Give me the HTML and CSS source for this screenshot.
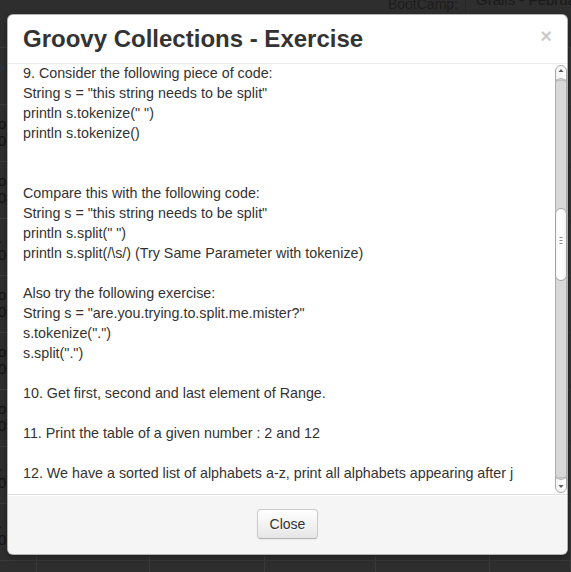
FILE: index.html
```html
<!DOCTYPE html>
<html>
<head>
<meta charset="utf-8">
<link rel="stylesheet" href="styles.css">
</head>
<body>
<div class="page">
  <div class="topbar">
    <span class="label">BootCamp:</span>
    <span class="select">Grails - February 2014</span>
  </div>
  <div class="table">
    <div class="row"><div class="cell first"><span class="link">›</span><span></span></div><div class="cell w1"></div><div class="cell w2"></div><div class="cell w3"></div><div class="cell w4"></div><div class="cell"></div></div>
    <div class="row"><div class="cell first"><span>o</span><span>0</span></div><div class="cell w1"></div><div class="cell w2"></div><div class="cell w3"></div><div class="cell w4"></div><div class="cell"></div></div>
    <div class="row"><div class="cell first"><span>o</span><span>0</span></div><div class="cell w1"></div><div class="cell w2"></div><div class="cell w3"></div><div class="cell w4"></div><div class="cell"></div></div>
    <div class="row"><div class="cell first"><span>.</span><span>0</span></div><div class="cell w1"></div><div class="cell w2"></div><div class="cell w3"></div><div class="cell w4"></div><div class="cell"></div></div>
    <div class="row"><div class="cell first"><span>o</span><span>0</span></div><div class="cell w1"></div><div class="cell w2"></div><div class="cell w3"></div><div class="cell w4"></div><div class="cell"></div></div>
    <div class="row"><div class="cell first"><span>o</span><span>0</span></div><div class="cell w1"></div><div class="cell w2"></div><div class="cell w3"></div><div class="cell w4"></div><div class="cell"></div></div>
    <div class="row"><div class="cell first"><span>o</span><span>0</span></div><div class="cell w1"></div><div class="cell w2"></div><div class="cell w3"></div><div class="cell w4"></div><div class="cell"></div></div>
    <div class="row"><div class="cell first"><span>.</span><span>0</span></div><div class="cell w1"></div><div class="cell w2"></div><div class="cell w3"></div><div class="cell w4"></div><div class="cell"></div></div>
    <div class="row"><div class="cell first"><span>.</span><span>0</span></div><div class="cell w1"></div><div class="cell w2"></div><div class="cell w3"></div><div class="cell w4"></div><div class="cell"></div></div>
    <div class="row last"><div class="cell first"></div><div class="cell w1"></div><div class="cell w2"></div><div class="cell w3"></div><div class="cell w4"></div><div class="cell"></div></div>
  </div>
</div>

<div class="modal">
  <div class="modal-header">
    <h3>Groovy Collections - Exercise</h3>
    <span class="close">×</span>
  </div>
  <div class="modal-body">
    <div class="content">
      9. Consider the following piece of code:<br>
      String s = "this string needs to be split"<br>
      println s.tokenize(" ")<br>
      println s.tokenize()<br>
      <br>
      <br>
      Compare this with the following code:<br>
      String s = "this string needs to be split"<br>
      println s.split(" ")<br>
      println s.split(/\s/) (Try Same Parameter with tokenize)<br>
      <br>
      Also try the following exercise:<br>
      String s = "are.you.trying.to.split.me.mister?"<br>
      s.tokenize(".")<br>
      s.split(".")<br>
      <br>
      10. Get first, second and last element of Range.<br>
      <br>
      11. Print the table of a given number : 2 and 12<br>
      <br>
      12. We have a sorted list of alphabets a-z, print all alphabets appearing after j<br>
    </div>
    <div class="scrollbar">
      <svg width="12" height="430" viewBox="0 0 12 430">
        <defs>
          <linearGradient id="btn" x1="0" y1="0" x2="1" y2="0">
            <stop offset="0" stop-color="#f2f2f2"/>
            <stop offset="1" stop-color="#ffffff"/>
          </linearGradient>
          <linearGradient id="thumb" x1="0" y1="0" x2="1" y2="0">
            <stop offset="0" stop-color="#f6f6f6"/>
            <stop offset="0.5" stop-color="#ffffff"/>
            <stop offset="1" stop-color="#f3f3f3"/>
          </linearGradient>
        </defs>
        <rect x="0.5" y="8" width="11" height="414" fill="#d8d8d8" stroke="#adadad"/>
        <path d="M0.5 16 V7 A5.5 5.5 0 0 1 11.5 7 V16 Z" fill="url(#btn)" stroke="#a9a9a9"/>
        <path d="M0.5 20 A5.5 5.5 0 0 1 11.5 20" fill="none" stroke="#b5b5b5"/>
        <polygon points="6,5 8.5,8 3.5,8" fill="#5a5a5a"/>
        <path d="M0.5 414 V423 A5.5 5.5 0 0 0 11.5 423 V414 Z" fill="url(#btn)" stroke="#a9a9a9"/>
        <path d="M0.5 410 A5.5 5.5 0 0 0 11.5 410" fill="none" stroke="#b5b5b5"/>
        <polygon points="3.5,421 8.5,421 6,424" fill="#5a5a5a"/>
        <rect x="0.5" y="144.5" width="11" height="72" rx="5.5" ry="5.5" fill="url(#thumb)" stroke="#a3a3a3"/>
        <line x1="4.5" y1="173.5" x2="7.5" y2="173.5" stroke="#8a8a8a"/>
        <line x1="4.5" y1="176.5" x2="7.5" y2="176.5" stroke="#8a8a8a"/>
        <line x1="4.5" y1="179.5" x2="7.5" y2="179.5" stroke="#8a8a8a"/>
      </svg>
    </div>
  </div>
  <div class="modal-footer">
    <span class="btn">Close</span>
  </div>
</div>
</body>
</html>
```
FILE: styles.css
```css
html, body {
  margin: 0;
  padding: 0;
}
body {
  background: #2e2e2e;
  font-family: "Liberation Sans", Arial, sans-serif;
  overflow: hidden;
  height: 572px;
  position: relative;
}
.page {
  width: 571px;
  height: 572px;
  overflow: hidden;
}
.topbar {
  height: 47px;
  display: flex;
  justify-content: flex-end;
  align-items: flex-start;
  overflow: hidden;
}
.label {
  font-size: 14px;
  line-height: 16px;
  margin-top: -4px;
  color: #1c1c1c;
  padding-right: 7px;
  border-right: 1px solid #262626;
  height: 16px;
}
.select {
  font-size: 15px;
  line-height: 16px;
  margin-top: -8px;
  color: #1a1a1a;
  padding-left: 10px;
  white-space: nowrap;
  width: 95px;
  overflow: hidden;
}
.table {
  border-top: 1px solid #3a3a3a;
}
.row {
  display: flex;
  height: 56px;
  border-bottom: 1px solid #3a3a3a;
}
.row.last {
  height: 11px;
  border-bottom: none;
}
.cell {
  border-right: 1px solid #3a3a3a;
  flex: 1;
}
.cell.first {
  flex: none;
  width: 37px;
  display: flex;
  flex-direction: column;
  align-items: flex-start;
  padding-top: 10px;
  box-sizing: border-box;
  font-size: 15px;
  line-height: 17px;
  color: #141414;
  overflow: hidden;
}
.cell.first span {
  margin-left: -2px;
}
.cell.first .link {
  color: #1d3a52;
  margin-left: 0;
}
.w1 { flex: none; width: 112px; }
.w2 { flex: none; width: 114px; }
.w3 { flex: none; width: 110px; }
.w4 { flex: none; width: 113px; }

.modal {
  position: absolute;
  top: 14px;
  left: 7px;
  width: 559px;
  background: #fff;
  border: 1px solid rgba(0, 0, 0, 0.3);
  border-radius: 6px;
  box-shadow: 0 3px 7px rgba(0, 0, 0, 0.3);
  overflow: hidden;
  color: #333;
  font-size: 14.3px;
  line-height: 20px;
}
.modal-header {
  padding: 9px 15px;
  border-bottom: 1px solid #eee;
  display: flex;
  justify-content: space-between;
  align-items: flex-start;
}
.modal-header h3 {
  margin: 0;
  font-size: 24px;
  line-height: 30px;
  font-weight: bold;
  color: #333;
}
.close {
  font-size: 20px;
  font-weight: bold;
  line-height: 20px;
  color: #000;
  opacity: 0.2;
  margin-top: 2px;
  text-shadow: 0 1px 0 #fff;
}
.modal-body {
  display: flex;
  height: 430px;
}
.content {
  flex: 1;
  padding: 0 15px;
  overflow: hidden;
  white-space: nowrap;
  margin-top: -1px;
}
.scrollbar {
  width: 12px;
  flex: none;
}
.scrollbar svg {
  display: block;
}
.modal-footer {
  padding: 14px 15px 15px;
  background: #f5f5f5;
  border-top: 1px solid #ddd;
  box-shadow: inset 0 1px 0 #fff;
  text-align: center;
}
.btn {
  display: inline-block;
  padding: 4px 12px;
  font-size: 14px;
  line-height: 20px;
  color: #333;
  text-shadow: 0 1px 1px rgba(255, 255, 255, 0.75);
  background: linear-gradient(#ffffff, #e6e6e6);
  border: 1px solid #cccccc;
  border-bottom-color: #b3b3b3;
  border-radius: 4px;
  box-shadow: inset 0 1px 0 rgba(255, 255, 255, 0.2), 0 1px 2px rgba(0, 0, 0, 0.05);
}
```
